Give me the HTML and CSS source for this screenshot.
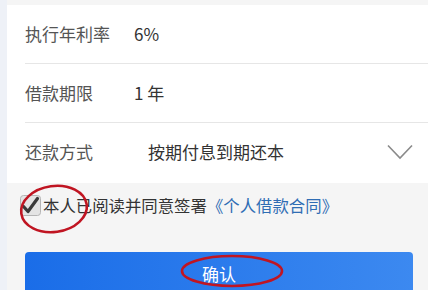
FILE: index.html
```html
<!DOCTYPE html>
<html lang="zh-CN">
<head>
    <meta charset="UTF-8">
    <meta name="viewport" content="width=device-width, initial-scale=1.0">
    <title>借款确认</title>
    <link rel="stylesheet" href="styles.css">
</head>
<body>
    <div class="page">
        <div class="card">
            <div class="row">
                <span class="label">执行年利率</span>
                <span class="value">6%</span>
            </div>
            <div class="row">
                <span class="label">借款期限</span>
                <span class="value">1 年</span>
            </div>
            <div class="row last">
                <span class="label">还款方式</span>
                <span class="value wide">按期付息到期还本</span>
                <svg class="chevron" width="26" height="16" viewBox="0 0 26 16">
                    <polyline points="1,1.5 13,14 25,1.5" fill="none" stroke="#8a8a8a" stroke-width="1.6"/>
                </svg>
            </div>
        </div>

        <div class="agree">
            <svg class="check" width="21" height="21" viewBox="0 0 21 21">
                <rect x="0.5" y="0.5" width="20" height="20" rx="3" fill="#e4e4e4" stroke="#b5b5b5"/>
                <path d="M3.5 11.5 L8 16.5 L17.5 3.5" fill="none" stroke="#3a3a3a" stroke-width="3.2" stroke-linecap="round" stroke-linejoin="round"/>
            </svg>
            <span class="agree-text">本人已阅读并同意签署<a class="link" href="#">《个人借款合同》</a></span>
        </div>

        <button class="btn">确认</button>
    </div>

    <!-- 手绘的红圈标注 -->
    <svg class="marks" width="428" height="290" viewBox="0 0 428 290">
        <ellipse cx="54" cy="209" rx="33" ry="23" transform="rotate(-8 54 209)" fill="none" stroke="#c01522" stroke-width="2.6"/>
        <ellipse cx="232" cy="271" rx="50" ry="15" fill="none" stroke="#c01522" stroke-width="2.6"/>
    </svg>
</body>
</html>
```

FILE: styles.css
```css
body {
    margin: 0;
    padding: 0;
    background-color: #eef1f7;
    font-family: "Noto Sans CJK SC", "Noto Sans", sans-serif;
    overflow: hidden;
}

.page {
    margin-left: 7px;
    padding-top: 5px;
    min-height: 285px;
    background-color: #f5f5f5;
}

.card {
    background-color: #fff;
    padding-left: 18px;
}

.row {
    display: flex;
    align-items: center;
    box-sizing: border-box;
    height: 59px;
    padding-bottom: 2px;
    border-bottom: 1px solid #e6e6e6;
    font-size: 17px;
}

.row.last {
    height: 60px;
    padding-bottom: 3px;
    border-bottom: none;
}

.label {
    width: 109px;
    color: #555;
}

.value {
    color: #333;
}

.value.wide {
    margin-left: 14px;
}

.chevron {
    margin-left: auto;
    margin-right: 15px;
}

.agree {
    display: flex;
    align-items: center;
    padding: 10px 0 0 13px;
    height: 24px;
    font-size: 16.4px;
    color: #333;
}

.check {
    margin-right: 2px;
}

.link {
    color: #2f6db4;
    text-decoration: none;
}

.btn {
    display: block;
    width: 388px;
    height: 42px;
    margin: 35px 0 0 18px;
    border: none;
    border-radius: 4px;
    background: linear-gradient(to right, #1a6de8, #3c89f0);
    color: #fff;
    font-family: inherit;
    font-size: 17px;
    padding: 0;
}

.marks {
    position: absolute;
    left: 0;
    top: 0;
    pointer-events: none;
}
```
